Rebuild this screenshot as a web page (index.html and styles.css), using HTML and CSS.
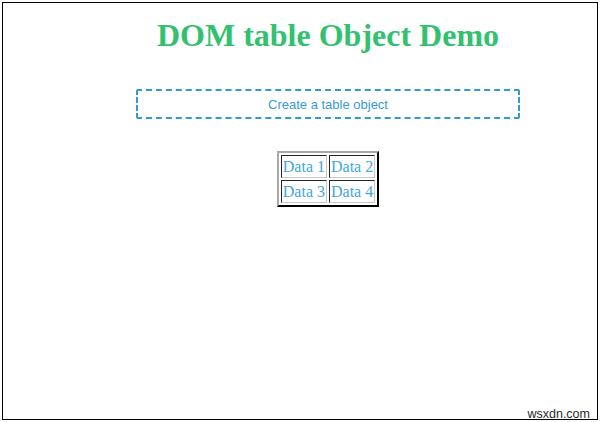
FILE: index.html
```html
<!DOCTYPE html>
<html>
<head>
<meta charset="utf-8">
<link rel="stylesheet" href="styles.css">
</head>
<body>
<div class="frame">
  <div class="content">
    <h1 class="title">DOM table Object Demo</h1>
    <button class="create-btn">Create a table object</button>
    <table class="data-table">
      <tr><td>Data 1</td><td>Data 2</td></tr>
      <tr><td>Data 3</td><td>Data 4</td></tr>
    </table>
  </div>
  <div class="watermark">wsxdn.com</div>
</div>
</body>
</html>
```
FILE: styles.css
```css
html, body {
  margin: 0;
  padding: 0;
  background: #ffffff;
}
.frame {
  position: relative;
  box-sizing: border-box;
  width: 596px;
  height: 418px;
  margin: 2px 0 0 2px;
  border: 1px solid #000;
  background: #fff;
}
.content {
  width: 384px;
  margin-left: 133px;
  padding-top: 14px;
  display: flex;
  flex-direction: column;
  align-items: center;
}
.title {
  margin: 0;
  font-family: "Liberation Serif", "Times New Roman", serif;
  font-weight: bold;
  font-size: 32px;
  line-height: 37px;
  color: #33c16f;
  text-align: center;
}
.create-btn {
  box-sizing: border-box;
  width: 384px;
  height: 30px;
  margin-top: 35px;
  border: 2px dashed #2f9ad6;
  border-radius: 2px;
  background: #fff;
  color: #3a9bd5;
  font-family: "Liberation Sans", Arial, sans-serif;
  font-size: 13px;
  padding: 0;
}
.data-table {
  margin-top: 32px;
  border: 2px outset #9a9a9a;
  border-color: #a8a8a8 #3a3a3a #3a3a3a #a8a8a8;
  border-spacing: 2px;
  font-family: "Liberation Serif", "Times New Roman", serif;
  font-size: 16px;
  color: #45a6dc;
}
.data-table td {
  border: 1px inset #888;
  border-color: #7a7a7a #c8c8c8 #c8c8c8 #7a7a7a;
  padding: 1px;
  line-height: 19px;
}
.watermark {
  position: absolute;
  right: 7px;
  bottom: -1px;
  font-family: "Liberation Sans", Arial, sans-serif;
  font-size: 12.5px;
  line-height: 12px;
  color: #2a2a2a;
}
```
